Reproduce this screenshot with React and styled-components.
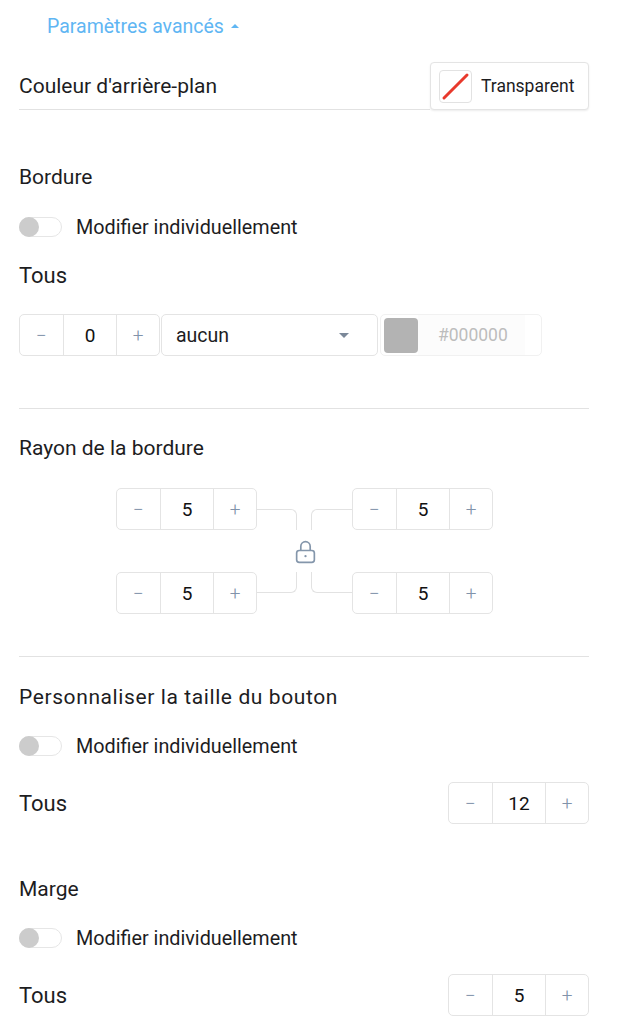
import React from 'react';
import styled, { createGlobalStyle } from 'styled-components';

const GlobalStyle = createGlobalStyle`
  body {
    margin: 0;
    background: #ffffff;
    font-family: Roboto, "Liberation Sans", sans-serif;
    color: #1d1d1f;
  }
`;

const Panel = styled.div`
  width: 570px;
  padding: 0 34px 10px 19px;
`;

const AdvancedLink = styled.div`
  height: 52px;
  display: flex;
  align-items: center;
  gap: 7px;
  padding-left: 28px;
  color: #5fb6f3;
  font-size: 19.5px;
`;

const Caret = styled.span`
  width: 0;
  height: 0;
  border-left: 4px solid transparent;
  border-right: 4px solid transparent;
  border-bottom: 4px solid #5fb6f3;
  margin-top: -1px;
`;

const CaretDown = styled.span`
  width: 0;
  height: 0;
  border-left: 5px solid transparent;
  border-right: 5px solid transparent;
  border-top: 5px solid #7b8899;
`;

const BgRow = styled.div`
  margin-top: 10px;
  height: 48px;
  display: flex;
  align-items: stretch;
`;

const BgLabel = styled.div`
  flex: 1;
  display: flex;
  align-items: center;
  font-size: 21px;
  border-bottom: 1px solid #e2e2e2;
  height: 47px;
`;

const TransparentButton = styled.button`
  width: 159px;
  height: 48px;
  display: flex;
  align-items: center;
  gap: 9px;
  padding: 0 8px;
  background: #fff;
  border: 1px solid #e4e4e4;
  border-radius: 4px;
  box-shadow: 0 1px 2px rgba(0, 0, 0, 0.08);
  font-family: inherit;
  font-size: 17.5px;
  color: #1d1d1f;
`;

const Swatch = styled.span`
  width: 33px;
  height: 33px;
  box-sizing: border-box;
  border: 1px solid #e2e2e2;
  border-radius: 4px;
  display: flex;
`;

const Heading = styled.div`
  margin-top: ${p => p.$top}px;
  height: 24px;
  line-height: 24px;
  font-size: ${p => p.$size || 21}px;
  letter-spacing: ${p => p.$spacing || 0}px;
`;

const ToggleRow = styled.div`
  margin-top: ${p => p.$top || 27}px;
  display: flex;
  align-items: center;
  gap: 14px;
  height: 20px;
  font-size: 19.8px;
`;

const Track = styled.span`
  width: 43px;
  height: 20px;
  box-sizing: border-box;
  border: 1px solid #e6e6e6;
  border-radius: 10px;
  position: relative;
`;

const Knob = styled.span`
  position: absolute;
  left: -1px;
  top: -1px;
  width: 20px;
  height: 20px;
  border-radius: 50%;
  background: #cccccc;
`;

const Row = styled.div`
  margin-top: ${p => p.$top || 26}px;
  height: 42px;
  display: flex;
  align-items: center;
  justify-content: ${p => (p.$spread ? 'space-between' : 'flex-start')};
  gap: 1px;
`;

const RowLabel = styled.div`
  font-size: 22px;
`;

const StepperBox = styled.div`
  width: 141px;
  height: 42px;
  box-sizing: border-box;
  display: grid;
  grid-template-columns: 43px 54px 1fr;
  border: 1px solid #e4e4e4;
  border-radius: 5px;
  background: #fff;
`;

const StepBtn = styled.span`
  display: flex;
  align-items: center;
  justify-content: center;
  color: #8193aa;
  font-size: 19px;
  font-weight: 300;
`;

const StepValue = styled.span`
  display: flex;
  align-items: center;
  justify-content: center;
  border-left: 1px solid #e4e4e4;
  border-right: 1px solid #e4e4e4;
  font-size: 19px;
  color: #111;
`;

const Select = styled.div`
  width: 217px;
  height: 42px;
  box-sizing: border-box;
  border: 1px solid #e4e4e4;
  border-radius: 5px;
  display: flex;
  align-items: center;
  justify-content: space-between;
  padding: 0 28px 0 14px;
  font-size: 19.5px;
`;

const ColorField = styled.div`
  margin-left: 1px;
  width: 162px;
  height: 42px;
  box-sizing: border-box;
  border: 1px solid #f1f1f1;
  border-radius: 5px;
  display: flex;
  align-items: center;
  padding: 0 16px 0 3px;
`;

const ColorChip = styled.span`
  width: 34px;
  height: 35px;
  border-radius: 4px;
  background: #b3b3b3;
`;

const HexInput = styled.span`
  flex: 1;
  height: 40px;
  display: flex;
  align-items: center;
  padding-left: 20px;
  background: #fcfcfc;
  color: #bdbdbd;
  font-size: 17.5px;
`;

const Divider = styled.div`
  margin-top: ${p => p.$top}px;
  height: 1px;
  background: #e2e2e2;
`;

const RadiusGrid = styled.div`
  margin: 28px auto 0;
  width: 376px;
  display: grid;
  grid-template-columns: 140px 96px 140px;
  grid-template-rows: 42px 42px 42px;
`;

const Cell = styled.div`
  grid-column: ${p => p.$col};
  grid-row: ${p => p.$row};
`;

const Connectors = styled.div`
  grid-column: 2;
  grid-row: 1 / 4;
  display: grid;
  grid-template-columns: 41px 14px 41px;
  grid-template-rows: 21px 21px 42px 21px 21px;
`;

const Link = styled.div`
  grid-column: ${p => p.$col};
  grid-row: ${p => p.$row};
  border-color: #e2e2e2;
  border-style: solid;
  border-width: 0;
  ${p => p.$edges}
`;

const LockSlot = styled.div`
  grid-column: 1 / 4;
  grid-row: 3;
  display: flex;
  align-items: center;
  justify-content: center;
  padding-left: 2px;
`;

function Stepper({ value }) {
  return (
    <StepperBox>
      <StepBtn>−</StepBtn>
      <StepValue>{value}</StepValue>
      <StepBtn>+</StepBtn>
    </StepperBox>
  );
}

function Toggle({ top }) {
  return (
    <ToggleRow $top={top}>
      <Track>
        <Knob />
      </Track>
      Modifier individuellement
    </ToggleRow>
  );
}

function LockIcon() {
  return (
    <svg width="21" height="25" viewBox="0 0 20 24" fill="none" stroke="#8496ab" strokeWidth="1.6">
      <path d="M5.5 11V7a4.5 4.5 0 0 1 9 0v4" />
      <rect x="1.5" y="11" width="17" height="11.5" rx="2.5" />
      <circle cx="10" cy="16.5" r="1.1" fill="#8496ab" stroke="none" />
    </svg>
  );
}

export default function App() {
  return (
    <>
      <GlobalStyle />
      <Panel>
        <AdvancedLink>
          Paramètres avancés
          <Caret />
        </AdvancedLink>

        <BgRow>
          <BgLabel>Couleur d'arrière-plan</BgLabel>
          <TransparentButton>
            <Swatch>
              <svg width="31" height="31" viewBox="0 0 31 31">
                <line x1="4" y1="27" x2="27" y2="4" stroke="#e8392c" strokeWidth="3" strokeLinecap="round" />
              </svg>
            </Swatch>
            Transparent
          </TransparentButton>
        </BgRow>

        <Heading $top={55}>Bordure</Heading>
        <Toggle top={28} />
        <Heading $top={27} $size={22}>Tous</Heading>
        <Row>
          <Stepper value="0" />
          <Select>
            aucun
            <CaretDown />
          </Select>
          <ColorField>
            <ColorChip />
            <HexInput>#000000</HexInput>
          </ColorField>
        </Row>

        <Divider $top={52} />

        <Heading $top={27}>Rayon de la bordure</Heading>
        <RadiusGrid>
          <Cell $col={1} $row={1}><Stepper value="5" /></Cell>
          <Cell $col={3} $row={1}><Stepper value="5" /></Cell>
          <Connectors>
            <Link $col={1} $row={2} $edges="border-top-width:1px;border-right-width:1px;border-top-right-radius:6px;" />
            <Link $col={3} $row={2} $edges="border-top-width:1px;border-left-width:1px;border-top-left-radius:6px;" />
            <LockSlot>
              <LockIcon />
            </LockSlot>
            <Link $col={1} $row={4} $edges="border-bottom-width:1px;border-right-width:1px;border-bottom-right-radius:6px;" />
            <Link $col={3} $row={4} $edges="border-bottom-width:1px;border-left-width:1px;border-bottom-left-radius:6px;" />
          </Connectors>
          <Cell $col={1} $row={3}><Stepper value="5" /></Cell>
          <Cell $col={3} $row={3}><Stepper value="5" /></Cell>
        </RadiusGrid>

        <Divider $top={42} />

        <Heading $top={28} $spacing={0.6}>Personnaliser la taille du bouton</Heading>
        <Toggle top={27} />
        <Row $spread>
          <RowLabel>Tous</RowLabel>
          <Stepper value="12" />
        </Row>

        <Heading $top={53}>Marge</Heading>
        <Toggle top={27} />
        <Row $spread>
          <RowLabel>Tous</RowLabel>
          <Stepper value="5" />
        </Row>
      </Panel>
    </>
  );
}
